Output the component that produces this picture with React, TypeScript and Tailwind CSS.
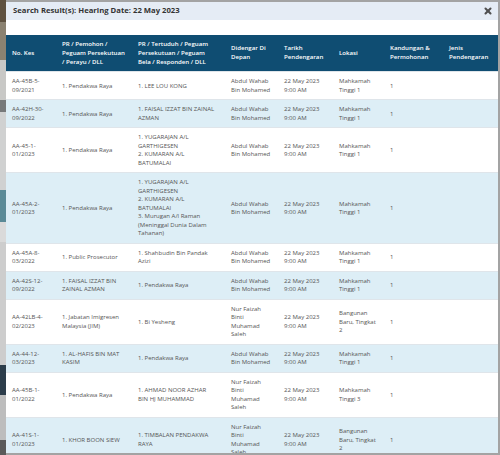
import { X } from 'lucide-react';

type Row = {
  kes: string[];
  pr: string[];
  tt: string[];
  judge: string[];
  date: string[];
  loc: string[];
  k: string;
  jenis?: string;
};

const abdul = ['Abdul Wahab', 'Bin Mohamed'];
const nur = ['Nur Faizah', 'Binti', 'Muhamad', 'Saleh'];
const when = ['22 May 2023', '9:00 AM'];
const mt1 = ['Mahkamah', 'Tinggi 1'];
const baru = ['Bangunan', 'Baru, Tingkat', '2'];

const rows: Row[] = [
  { kes: ['AA-45B-5-', '09/2021'], pr: ['1. Pendakwa Raya'], tt: ['1. LEE LOU KONG'], judge: abdul, date: when, loc: mt1, k: '1' },
  { kes: ['AA-42H-30-', '09/2022'], pr: ['1. Pendakwa Raya'], tt: ['1. FAISAL IZZAT BIN ZAINAL', 'AZMAN'], judge: abdul, date: when, loc: mt1, k: '1' },
  { kes: ['AA-45-1-', '01/2023'], pr: ['1. Pendakwa Raya'], tt: ['1. YUGARAJAN A/L', 'GARTHIGESEN', '2. KUMARAN A/L', 'BATUMALAI'], judge: abdul, date: when, loc: mt1, k: '1' },
  {
    kes: ['AA-45A-2-', '01/2023'],
    pr: ['1. Pendakwa Raya'],
    tt: ['1. YUGARAJAN A/L', 'GARTHIGESEN', '2. KUMARAN A/L', 'BATUMALAI', '3. Murugan A/l Raman', '(Meninggal Dunia Dalam', 'Tahanan)'],
    judge: abdul,
    date: when,
    loc: mt1,
    k: '1',
  },
  { kes: ['AA-45A-8-', '03/2022'], pr: ['1. Public Prosecutor'], tt: ['1. Shahbudin Bin Pandak', 'Azizi'], judge: abdul, date: when, loc: mt1, k: '1' },
  { kes: ['AA-42S-12-', '09/2022'], pr: ['1. FAISAL IZZAT BIN', 'ZAINAL AZMAN'], tt: ['1. Pendakwa Raya'], judge: abdul, date: when, loc: mt1, k: '1' },
  { kes: ['AA-42LB-4-', '02/2023'], pr: ['1. Jabatan Imigresen', 'Malaysia (JIM)'], tt: ['1. Bi Yesheng'], judge: nur, date: when, loc: baru, k: '1' },
  { kes: ['AA-44-12-', '03/2023'], pr: ['1. AL-HAFIS BIN MAT', 'KASIM'], tt: ['1. Pendakwa Raya'], judge: abdul, date: when, loc: mt1, k: '1' },
  { kes: ['AA-45B-1-', '01/2022'], pr: ['1. Pendakwa Raya'], tt: ['1. AHMAD NOOR AZHAR', 'BIN HJ MUHAMMAD'], judge: nur, date: when, loc: ['Mahkamah', 'Tinggi 3'], k: '1' },
  { kes: ['AA-41S-1-', '01/2023'], pr: ['1. KHOR BOON SIEW'], tt: ['1. TIMBALAN PENDAKWA', 'RAYA'], judge: nur, date: when, loc: baru, k: '1' },
];

const headers = [
  ['No. Kes'],
  ['PR / Pemohon /', 'Peguam Persekutuan', '/ Perayu / DLL'],
  ['PR / Tertuduh / Peguam', 'Persekutuan / Peguam', 'Bela / Responden / DLL'],
  ['Didengar Di', 'Depan'],
  ['Tarikh', 'Pendengaran'],
  ['Lokasi'],
  ['Kandungan &', 'Permohonan'],
  ['Jenis', 'Pendengaran'],
];

function Lines({ lines }: { lines: string[] }) {
  return (
    <>
      {lines.map((l, i) => (
        <span key={i} className="block whitespace-nowrap">
          {l}
        </span>
      ))}
    </>
  );
}

// strip of the page behind the modal, on the left edge
const backdrop = [
  { h: 'h-[22px]', c: 'bg-[#5e5140]' },
  { h: 'h-[38px]', c: 'bg-[#8b8271]' },
  { h: 'h-[40px]', c: 'bg-[#c8c8c6]' },
  { h: 'h-[12px]', c: 'bg-[#77797a]' },
  { h: 'h-[78px]', c: 'bg-[#d0d1d1]' },
  { h: 'h-[32px]', c: 'bg-[#5a8a97]' },
  { h: 'h-[20px]', c: 'bg-[#dadada]' },
  { h: 'h-[123px]', c: 'bg-[#cdcdcd]' },
  { h: 'h-[30px]', c: 'bg-[#2c3d4b]' },
  { h: 'h-[45px]', c: 'bg-[#bdbdbd]' },
  { h: 'h-[15px]', c: 'bg-[#5a5a5a]' },
];

export default function App() {
  return (
    <div className="flex w-[500px] h-[455px] overflow-hidden bg-white" style={{ fontFamily: '"Open Sans", "Noto Sans", sans-serif' }}>
      <div className="w-[6px] shrink-0 flex flex-col">
        {backdrop.map((b, i) => (
          <div key={i} className={`${b.h} ${b.c} shrink-0`} />
        ))}
      </div>
      <div className="flex-1 flex flex-col border-t-2 border-r-2 border-b-2 border-[#a3a3a3] overflow-hidden bg-white">
        <div className="h-[18px] shrink-0 flex items-center justify-between bg-[#e5ecf5] pl-[7px] pr-[5px]">
          <span className="text-[7.7px] font-bold text-[#333333]">Search Result(s): Hearing Date: 22 May 2023</span>
          <X className="w-[10px] h-[10px] text-[#505050]" strokeWidth={5} />
        </div>
        <div className="pt-[15px] overflow-hidden">
          <table className="w-full table-fixed border-collapse">
            <colgroup>
              <col className="w-[50px]" />
              <col className="w-[76px]" />
              <col className="w-[93px]" />
              <col className="w-[53px]" />
              <col className="w-[55px]" />
              <col className="w-[51px]" />
              <col className="w-[59px]" />
              <col className="w-[55px]" />
            </colgroup>
            <thead>
              <tr className="bg-[#0f4d72]">
                {headers.map((h, i) => (
                  <th key={i} className="text-left align-middle px-[6px] py-[5px] text-[6.1px] leading-[8.8px] font-semibold text-white">
                    <Lines lines={h} />
                  </th>
                ))}
              </tr>
            </thead>
            <tbody>
              {rows.map((r, i) => (
                <tr key={i} className={`border-t border-[#dfe5ea] ${i % 2 === 1 ? 'bg-[#ddeef6]' : 'bg-white'}`}>
                  {[r.kes, r.pr, r.tt, r.judge, r.date, r.loc, [r.k], [r.jenis ?? '']].map((cell, j) => (
                    <td key={j} className="align-middle px-[6px] py-[5px] text-[6px] leading-[8.5px] text-[#555555]">
                      <Lines lines={cell} />
                    </td>
                  ))}
                </tr>
              ))}
            </tbody>
          </table>
        </div>
      </div>
    </div>
  );
}
